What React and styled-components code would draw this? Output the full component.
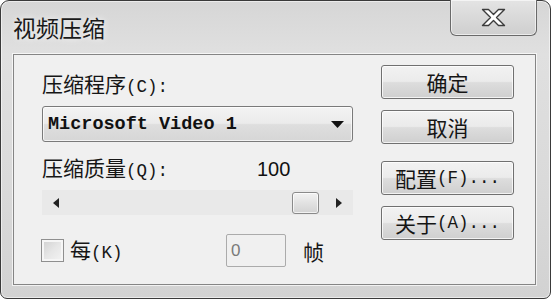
import React from "react";
import styled, { createGlobalStyle } from "styled-components";

const Global = createGlobalStyle`
  html, body { margin: 0; padding: 0; background: #ffffff; }
  body { width: 551px; height: 299px; overflow: hidden; }
  * { box-sizing: border-box; }
`;

const CJK = `"Noto Sans CJK SC", "Noto Sans", sans-serif`;

const Window = styled.div`
  width: 551px;
  height: 299px;
  display: flex;
  flex-direction: column;
  border: 1px solid #3a3a3a;
  border-radius: 9px 9px 7px 7px;
  background: linear-gradient(180deg, #d6d6d6 0%, #e0e0e0 18%, #dadada 60%, #d2d2d2 100%);
  box-shadow: inset 0 0 0 1px rgba(255, 255, 255, 0.55);
  font-family: ${CJK};
  color: #161616;
`;

const TitleBar = styled.div`
  height: 53px;
  flex: none;
  display: flex;
  justify-content: space-between;
  align-items: flex-start;
`;

const Title = styled.div`
  margin: 14px 0 0 12px;
  font-size: 23px;
  line-height: 25px;
  color: #1a1a1a;
  text-shadow: 0 0 6px rgba(255, 255, 255, 0.9);
`;

const CloseButton = styled.div`
  margin: -1px 13px 0 0;
  width: 87px;
  height: 36px;
  border: 1px solid #6a6a6a;
  border-top: none;
  border-radius: 0 0 6px 6px;
  background: linear-gradient(180deg, #e4e4e4 0%, #d9d9d9 50%, #cfcfcf 100%);
  box-shadow: inset 0 0 0 1px rgba(255, 255, 255, 0.6);
  display: flex;
  align-items: center;
  justify-content: center;
`;

const Client = styled.div`
  flex: 1;
  margin: 0 14px 13px 12px;
  border: 1px solid #858585;
  box-shadow: 0 0 0 1px rgba(255, 255, 255, 0.7);
  background: #f0f0f0;
  display: flex;
  gap: 28px;
  padding: 10px 20px 0 28px;
`;

const Main = styled.div`
  width: 311px;
  padding-top: 6px;
  display: flex;
  flex-direction: column;
`;

const Label = styled.div`
  font-size: 21px;
  line-height: 24px;
  white-space: nowrap;
  width: ${(p) => (p.$width ? `${p.$width}px` : "auto")};
  flex: none;
`;

const Key = styled.span`
  font-family: "Liberation Mono", "DejaVu Sans Mono", monospace;
  font-size: 17.5px;
`;

const Combo = styled.div`
  margin-top: 7px;
  height: 36px;
  border: 1px solid #7a7a7a;
  border-radius: 3px;
  background: linear-gradient(180deg, #f3f3f3 0%, #ebebeb 48%, #dedede 52%, #d6d6d6 100%);
  box-shadow: inset 0 0 0 1px rgba(255, 255, 255, 0.7);
  display: flex;
  align-items: center;
  justify-content: space-between;
  padding: 0 8px 0 5px;
`;

const ComboText = styled.span`
  font-family: "Liberation Mono", "DejaVu Sans Mono", monospace;
  font-weight: bold;
  font-size: 18.5px;
  color: #111;
`;

const Row = styled.div`
  margin-top: ${(p) => p.$top}px;
  display: flex;
  align-items: center;
`;

const Value = styled.span`
  font-family: "Liberation Sans", Arial, sans-serif;
  font-size: 20px;
  line-height: 24px;
  color: #111;
`;

const Slider = styled.div`
  margin-top: 7px;
  height: 25px;
  display: flex;
  background: #e9e9e9;
`;

const SliderArrow = styled.div`
  width: 28px;
  flex: none;
  display: flex;
  align-items: center;
  justify-content: center;
`;

const Track = styled.div`
  flex: 1;
  display: flex;
  align-items: center;
  justify-content: flex-end;
  padding-right: 6px;
`;

const Thumb = styled.div`
  width: 27px;
  height: 22px;
  border: 1px solid #8a8a8a;
  border-radius: 3px;
  background: linear-gradient(180deg, #f2f2f2 0%, #e2e2e2 50%, #d3d3d3 100%);
  box-shadow: inset 0 0 0 1px rgba(255, 255, 255, 0.7);
`;

const CheckGroup = styled.div`
  width: 185px;
  flex: none;
  display: flex;
  align-items: center;
  gap: 6px;
  margin-left: -1px;
`;

const CheckBox = styled.div`
  width: 23px;
  height: 23px;
  border: 1px solid #8f8f8f;
  background: linear-gradient(135deg, #cfcfcf 0%, #e6e6e6 50%, #f4f4f4 100%);
  box-shadow: inset 0 0 0 2px #f6f6f6;
`;

const TextBox = styled.div`
  width: 60px;
  height: 33px;
  border: 1px solid #ababab;
  border-radius: 2px;
  background: #f0f0f0;
  display: flex;
  align-items: center;
  padding-left: 4px;
  font-family: "Liberation Sans", Arial, sans-serif;
  font-size: 17px;
  color: #7a7a7a;
`;

const Unit = styled.span`
  margin-left: 17px;
  font-size: 21px;
  line-height: 24px;
`;

const Buttons = styled.div`
  width: 133px;
  display: flex;
  flex-direction: column;
  gap: 17px;
`;

const ButtonGroup = styled.div`
  display: flex;
  flex-direction: column;
  gap: 11px;
`;

const Button = styled.div`
  height: 34px;
  border: 1px solid #707070;
  border-radius: 3px;
  background: linear-gradient(180deg, #f2f2f2 0%, #ebebeb 48%, #dddddd 52%, #cfcfcf 100%);
  box-shadow: inset 0 0 0 1px rgba(255, 255, 255, 0.75);
  display: flex;
  align-items: center;
  justify-content: center;
  font-size: 21px;
  line-height: 24px;
  white-space: nowrap;
  color: #151515;
`;

const CloseIcon = () => (
  <svg width="25" height="19" viewBox="0 0 25 19">
    <polygon
      points="1.5,1.5 7.5,1.5 12.5,6.5 17.5,1.5 23.5,1.5 15.5,9.5 23.5,17.5 17.5,17.5 12.5,12.5 7.5,17.5 1.5,17.5 9.5,9.5"
      fill="#ffffff"
      stroke="#3c3c3c"
      strokeWidth="1.4"
      strokeLinejoin="round"
    />
  </svg>
);

const DownArrow = () => (
  <svg width="13" height="7" viewBox="0 0 13 7">
    <polygon points="0,0 13,0 6.5,7" fill="#111" />
  </svg>
);

const SideArrow = ({ dir }) => (
  <svg width="6" height="10" viewBox="0 0 6 10">
    <polygon points={dir === "left" ? "6,0 6,10 0,5" : "0,0 0,10 6,5"} fill="#222" />
  </svg>
);

export default function App() {
  return (
    <>
      <Global />
      <Window>
        <TitleBar>
          <Title>视频压缩</Title>
          <CloseButton>
            <CloseIcon />
          </CloseButton>
        </TitleBar>
        <Client>
          <Main>
            <Label>
              压缩程序<Key>(C):</Key>
            </Label>
            <Combo>
              <ComboText>Microsoft Video 1</ComboText>
              <DownArrow />
            </Combo>
            <Row $top={13}>
              <Label $width={215}>
                压缩质量<Key>(Q):</Key>
              </Label>
              <Value>100</Value>
            </Row>
            <Slider>
              <SliderArrow>
                <SideArrow dir="left" />
              </SliderArrow>
              <Track>
                <Thumb />
              </Track>
              <SliderArrow>
                <SideArrow dir="right" />
              </SliderArrow>
            </Slider>
            <Row $top={19}>
              <CheckGroup>
                <CheckBox />
                <Label>
                  每<Key>(K)</Key>
                </Label>
              </CheckGroup>
              <TextBox>0</TextBox>
              <Unit>帧</Unit>
            </Row>
          </Main>
          <Buttons>
            <ButtonGroup>
              <Button>确定</Button>
              <Button>取消</Button>
            </ButtonGroup>
            <ButtonGroup>
              <Button>
                配置<Key>(F)...</Key>
              </Button>
              <Button>
                关于<Key>(A)...</Key>
              </Button>
            </ButtonGroup>
          </Buttons>
        </Client>
      </Window>
    </>
  );
}
